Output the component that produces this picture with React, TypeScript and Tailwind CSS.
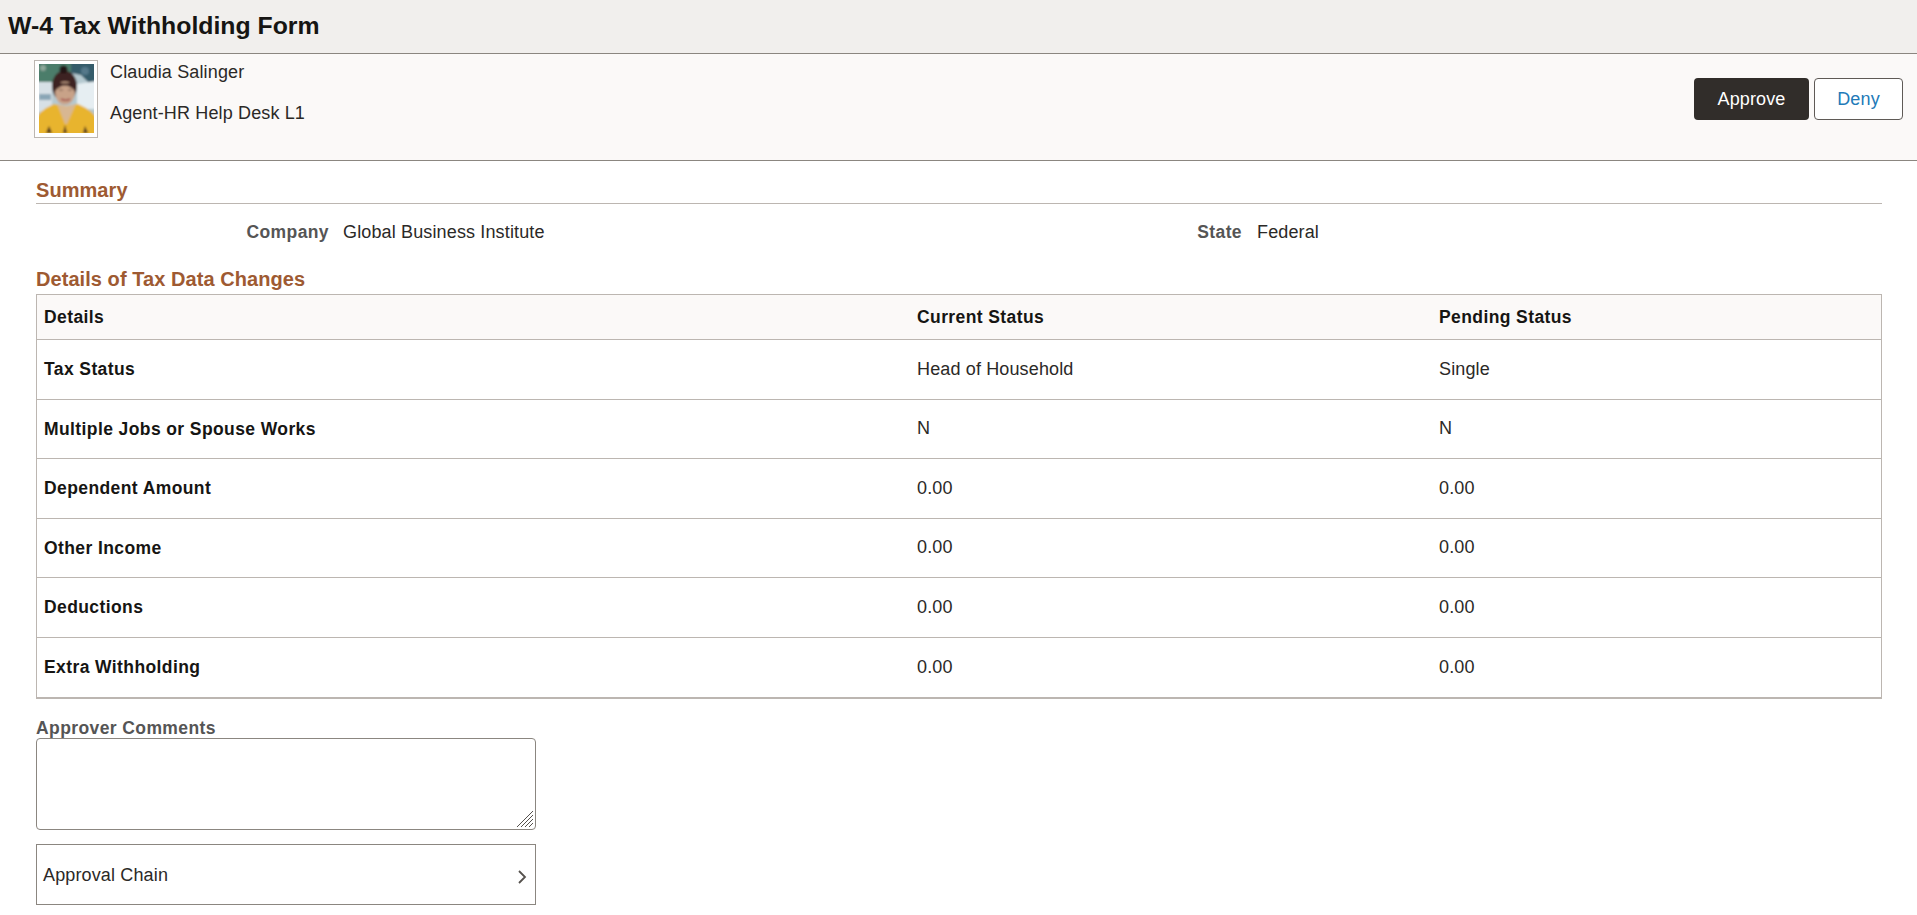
const rows = [
  ['Tax Status', 'Head of Household', 'Single'],
  ['Multiple Jobs or Spouse Works', 'N', 'N'],
  ['Dependent Amount', '0.00', '0.00'],
  ['Other Income', '0.00', '0.00'],
  ['Deductions', '0.00', '0.00'],
  ['Extra Withholding', '0.00', '0.00'],
]

// Small portrait, blurred a bit so it reads like the low-res photo
function Portrait() {
  return (
    <svg width="55" height="69" viewBox="0 0 55 69" className="block">
      <defs>
        <filter id="soft" x="-10%" y="-10%" width="120%" height="120%">
          <feGaussianBlur stdDeviation="1.1" />
        </filter>
        <clipPath id="frame"><rect width="55" height="69" /></clipPath>
      </defs>
      <g clipPath="url(#frame)">
        <g filter="url(#soft)">
          <rect x="-3" y="-3" width="61" height="75" fill="#b5c9d0" />
          <rect x="-3" y="-3" width="36" height="22" fill="#4b7d6b" />
          <path d="M32-3h26v20l-8 2-8-8-10-2z" fill="#355c6b" />
          <circle cx="46" cy="7" r="4" fill="#54788a" />
          <circle cx="4" cy="4" r="3" fill="#8fa89a" />
          <path d="M-3 18h16v30H-3z" fill="#d7e0e6" />
          <path d="M38 20l20-3v28H38z" fill="#e6eef2" />
          <path d="M0 30h12v6H0z" fill="#8aa6b6" />
          <path d="M-3 72V56q2-9 18-16l12 3 12-3q16 7 19 16v16z" fill="#e8b42e" />
          <path d="M18 40l8 20h2l9-20-10 2z" fill="#d8b792" />
          <ellipse cx="25.5" cy="22" rx="12.5" ry="15.5" fill="#3d2422" />
          <circle cx="24.5" cy="5.5" r="4" fill="#241615" />
          <ellipse cx="26" cy="29" rx="10" ry="11.5" fill="#c8a288" />
          <path d="M16 27q10-11 20 0l-1-8H17z" fill="#3d2422" />
          <path d="M20 26h4M29 26h4" stroke="#7a5c4c" strokeWidth="1" />
          <path d="M22 35q5 2.5 9 0" stroke="#a5504e" strokeWidth="1.6" fill="none" />
          <path d="M7 69l3-7 3 7zM24 69l2-8 2 8zM44 69l2-7 3 7z" fill="#4a3020" />
        </g>
      </g>
    </svg>
  )
}

export default function App() {
  return (
    <div className="min-h-[915px] bg-white font-['Liberation_Sans',Arial,sans-serif] text-[18px] tracking-[0.14px] text-[#2b2927]">
      {/* page title */}
      <div className="h-[54px] bg-[#f1efed] border-b border-[#8b8680] pl-2 flex items-center">
        <h1 className="text-[24.8px] tracking-normal font-bold leading-none text-[#161513]">W-4 Tax Withholding Form</h1>
      </div>

      {/* employee banner */}
      <div className="h-[107px] bg-[#fbf9f8] border-b border-[#8b8680] flex justify-between pl-[34px] pr-[14px]">
        <div className="flex pt-[6px]">
          <div className="w-[64px] h-[78px] border border-[#bcb6b1] bg-white px-1 pt-[3px]">
            <Portrait />
          </div>
          <div className="ml-3">
            <div className="leading-[24px]">Claudia Salinger</div>
            <div className="leading-[24px] mt-[17px]">Agent-HR Help Desk L1</div>
          </div>
        </div>
        <div className="flex gap-[5px] pt-[24px]">
          <button className="w-[115px] h-[42px] rounded-[4px] bg-[#312d2a] text-white text-[18px]">Approve</button>
          <button className="w-[89px] h-[42px] rounded-[4px] bg-white border border-[#5f5a56] text-[#227ab8] text-[18px]">Deny</button>
        </div>
      </div>

      <div className="pl-9 pr-[35px]">
        {/* summary */}
        <div className="mt-[17px] border-b border-[#bcb6b1] text-[20px] tracking-[0.06px] font-bold text-[#9e5a32] leading-[24px] h-[26px]">Summary</div>
        <div className="flex h-[28px] mt-[14px] items-center">
          <div className="w-[293px] text-right text-[17.5px] tracking-[0.4px] font-bold text-[#555555]">Company</div>
          <div className="ml-[14px] w-[839px]">Global Business Institute</div>
          <div className="w-[60px] text-right text-[17.5px] tracking-[0.4px] font-bold text-[#555555]">State</div>
          <div className="ml-[15px]">Federal</div>
        </div>

        {/* tax data */}
        <div className="mt-[21px] text-[20px] tracking-[0.06px] font-bold text-[#9e5a32] leading-[24px]">Details of Tax Data Changes</div>
        <div className="border border-b-2 border-[#bcb6b1] mt-[3px]">
          <div className="flex h-[45px] items-center bg-[#fbf9f8] border-b border-[#bcb6b1] text-[17.5px] tracking-[0.4px] font-bold text-[#161513]">
            <div className="w-[880px] pl-[7px]">Details</div>
            <div className="w-[522px]">Current Status</div>
            <div>Pending Status</div>
          </div>
          {rows.map((r, i) => (
            <div key={r[0]} className={`flex h-[59.5px] items-center ${i < rows.length - 1 ? 'border-b border-[#bcb6b1]' : ''}`}>
              <div className="w-[880px] pl-[7px] text-[17.5px] tracking-[0.4px] font-bold text-[#161513]">{r[0]}</div>
              <div className="w-[522px]">{r[1]}</div>
              <div>{r[2]}</div>
            </div>
          ))}
        </div>

        {/* comments */}
        <div className="mt-[19px] text-[17.5px] tracking-[0.4px] font-bold text-[#555555] leading-[20px]">Approver Comments</div>
        <div className="relative w-[500px] h-[92px]">
          <textarea className="block w-full h-full resize-none border border-[#8b8680] rounded-[4px] bg-white" />
          <svg width="18" height="18" viewBox="0 0 18 18" className="absolute right-[2px] bottom-[2px]" stroke="#55514d" strokeWidth="1"><path d="M1 17L17 1M5 17L17 5M9 17L17 9M13 17l4-4" /></svg>
        </div>
        <div className="mt-[14px] w-[500px] h-[61px] border border-[#8b8680] flex items-center justify-between pl-[6px] pr-[8px]">
          <span className="mt-[1px]">Approval Chain</span>
          <svg width="10" height="16" viewBox="0 0 10 16" fill="none" stroke="#55514d" strokeWidth="1.8" className="mt-[4px]"><path d="M2 2l6 6-6 6" /></svg>
        </div>
      </div>
    </div>
  )
}
